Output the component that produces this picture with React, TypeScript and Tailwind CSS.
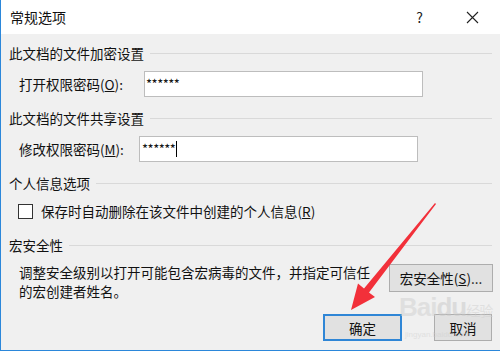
import React from "react";

const font = { fontFamily: '"Microsoft YaHei UI","Noto Sans CJK SC","Noto Sans",sans-serif' };

function Header({ text }: { text: string }) {
  return (
    <div className="flex items-center h-[18px] pl-[8px] pr-[8px]">
      <span className="whitespace-nowrap">{text}</span>
      <div className="flex-1 h-px bg-[#d9d9d9] ml-[6px]" />
    </div>
  );
}

export default function App() {
  return (
    <div
      className="relative w-[500px] h-[351px] overflow-hidden bg-[#f0f0f0] border-l border-b border-[#2b87da] text-[13.5px] text-[#111] leading-[18px]"
      style={font}
    >
      {/* title bar */}
      <div className="h-[34px] bg-white flex items-center pl-[9px]">
        <span className="text-[14px]">常规选项</span>
        <span className="ml-auto mr-[43px] text-[14px] text-[#222]">?</span>
        <svg width="13" height="13" viewBox="0 0 13 13" className="mr-[21px]">
          <path d="M1 1 L12 12 M12 1 L1 12" stroke="#222" strokeWidth="1.1" />
        </svg>
      </div>

      <div className="mt-[10px]">
        <Header text="此文档的文件加密设置" />
      </div>
      <div className="flex items-center mt-[9px] pl-[18px] h-[26px]">
        <span className="w-[125px] whitespace-nowrap">
          打开权限密码(<span className="underline">O</span>):
        </span>
        <div className="w-[279px] h-[26px] bg-white border border-[#bdbdbd] flex items-center pl-[1px] text-[13px] tracking-[-0.5px]">
          ******
        </div>
      </div>

      <div className="mt-[12px]">
        <Header text="此文档的文件共享设置" />
      </div>
      <div className="flex items-center mt-[9px] pl-[18px] h-[26px]">
        <span className="w-[120px] whitespace-nowrap">
          修改权限密码(<span className="underline">M</span>):
        </span>
        <div className="w-[279px] h-[26px] bg-white border border-[#bdbdbd] flex items-center pl-[2px] text-[13px] tracking-[-0.5px]">
          ******
          <span className="inline-block w-px h-[16px] bg-black ml-[1px]" />
        </div>
      </div>

      <div className="mt-[12px]">
        <Header text="个人信息选项" />
      </div>
      <div className="flex items-center mt-[10px] pl-[17px] h-[18px]">
        <div className="w-[15px] h-[15px] bg-white border border-[#333]" />
        <span className="ml-[8px] whitespace-nowrap">
          保存时自动删除在该文件中创建的个人信息(<span className="underline">R</span>)
        </span>
      </div>

      <div className="mt-[16px]">
        <Header text="宏安全性" />
      </div>
      <div className="flex mt-[9px] pl-[18px]">
        <p className="w-[370px] leading-[19px] whitespace-nowrap">
          调整安全级别以打开可能包含宏病毒的文件，并指定可信任
          <br />
          的宏创建者姓名。
        </p>
        <div className="flex-1 flex justify-end pr-[7px]">
          <div className="w-[104px] h-[28px] mt-[1px] bg-[#e1e1e1] border border-[#adadad] flex items-center justify-center whitespace-nowrap">
            宏安全性(<span className="underline">S</span>)...
          </div>
        </div>
      </div>

      <div className="flex justify-end mt-[13px] pr-[8px] gap-[32px]">
        <div className="w-[79px] h-[27px] bg-[#e1e1e1] border-2 border-[#2f86d6] flex items-center justify-center">
          确定
        </div>
        <div className="w-[58px] h-[27px] bg-[#e1e1e1] border border-[#adadad] flex items-center justify-center">
          取消
        </div>
      </div>

      {/* watermark */}
      <div className="absolute left-[398px] top-[294px] text-[#d0d0d0] opacity-50 pointer-events-none">
        <div className="text-[26px] leading-[26px] font-bold tracking-[-1px]" style={{ fontFamily: '"Liberation Sans",sans-serif' }}>
          Bai<span className="text-[#c8c8c8]">du</span>
          <span className="text-[14px] font-normal" style={font}>经验</span>
        </div>
      </div>
      <div className="absolute left-[404px] top-[330px] text-[8px] leading-[10px] text-[#d0d0d0] opacity-50 pointer-events-none" style={{ fontFamily: '"Liberation Sans",sans-serif' }}>
        jingyan.baidu.com
      </div>

      {/* red arrow */}
      <svg className="absolute left-0 top-0 pointer-events-none" width="500" height="351" viewBox="0 0 500 351">
        <polygon
          points="434,203 435,204 368,292.5 374,297 350,310 357,283.5 363,288.5"
          fill="#f2303a"
        />
      </svg>
    </div>
  );
}
